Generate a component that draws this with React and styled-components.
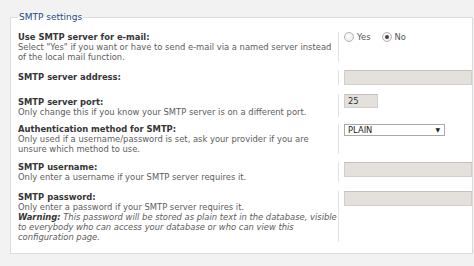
import React from "react";
import styled, { createGlobalStyle } from "styled-components";

const Global = createGlobalStyle`
  html, body { margin: 0; padding: 0; }
  body {
    background: #f2f2f2;
    font-family: "DejaVu Sans", Verdana, sans-serif;
    font-size: 8.4px;
    width: 474px;
    height: 266px;
    overflow: hidden;
  }
`;

const Page = styled.div`
  padding: 12px 1px 0 10px;
`;

const Fieldset = styled.fieldset`
  margin: 0;
  padding: 10.4px 0 0 7px;
  border: 1px solid #dcdcdc;
  background: #fff;
  height: 242px;
  box-sizing: border-box;
`;

const Legend = styled.legend`
  padding: 0 1px;
  margin-left: 0;
  color: #1f4a84;
  font-size: 9px;
  font-family: "DejaVu Sans", Verdana, sans-serif;
`;

const Row = styled.div`
  display: grid;
  grid-template-columns: 320px 1fr;
  align-items: ${(p) => (p.$center ? "center" : "start")};
  margin-bottom: ${(p) => p.$gap ?? 7.5}px;
  line-height: 10px;
`;

const LabelCell = styled.div`
  padding: ${(p) => p.$pt ?? 0}px 1px 0 0;
`;

const Title = styled.div`
  font-weight: bold;
  color: #363636;
`;

const Desc = styled.div`
  color: #5c5c5c;
`;

const Warn = styled.span`
  font-style: italic;
  color: #5c5c5c;
`;

const WarnLabel = styled.b`
  color: #363636;
`;

const FieldCell = styled.div`
  align-self: stretch;
  border-left: 1px solid #e2e2e2;
  padding-left: 5px;
`;

const TextBox = styled.div`
  box-sizing: border-box;
  width: ${(p) => p.$w}px;
  height: ${(p) => p.$h ?? 15}px;
  background: #e4e1dc;
  border: 1px solid #d2cfca;
  border-top-color: #c4c1bc;
  color: #333;
  padding: 1px 3px;
  line-height: 11px;
`;

const Radios = styled.div`
  display: flex;
  align-items: center;
  gap: 11px;
  color: #555;
  height: 10px;
`;

const RadioLabel = styled.label`
  display: flex;
  align-items: center;
  gap: 3px;
`;

const RadioDot = styled.span`
  box-sizing: border-box;
  width: 10px;
  height: 10px;
  border-radius: 50%;
  border: 1px solid #b4b4b4;
  background: radial-gradient(circle at 40% 40%, #fff 0%, #e6e6e6 100%);
  display: flex;
  align-items: center;
  justify-content: center;
  &::after {
    content: "";
    width: 4px;
    height: 4px;
    border-radius: 50%;
    background: ${(p) => (p.$on ? "#444" : "transparent")};
  }
`;

const Select = styled.div`
  box-sizing: border-box;
  width: 101px;
  height: 12px;
  border: 1px solid #a9a9a9;
  background: #fff;
  display: flex;
  align-items: center;
  justify-content: space-between;
  padding: 0 4px 0 3px;
  color: #222;
  font-size: 8.4px;
`;

const Arrow = styled.span`
  font-size: 6px;
  color: #222;
`;

export default function App() {
  return (
    <>
      <Global />
      <Page>
        <Fieldset>
          <Legend>SMTP settings</Legend>
          <Row>
            <LabelCell>
              <Title>Use SMTP server for e-mail:</Title>
              <Desc>
                Select "Yes" if you want or have to send e-mail via a named server instead of the local mail function.
              </Desc>
            </LabelCell>
            <FieldCell>
              <Radios>
                <RadioLabel>
                  <RadioDot />
                  Yes
                </RadioLabel>
                <RadioLabel>
                  <RadioDot $on />
                  No
                </RadioLabel>
              </Radios>
            </FieldCell>
          </Row>
          <Row $center $gap={9.3}>
            <LabelCell>
              <Title>SMTP server address:</Title>
            </LabelCell>
            <FieldCell>
              <TextBox $w={128} />
            </FieldCell>
          </Row>
          <Row>
            <LabelCell $pt={2.4}>
              <Title>SMTP server port:</Title>
              <Desc>Only change this if you know your SMTP server is on a different port.</Desc>
            </LabelCell>
            <FieldCell>
              <TextBox $w={34} $h={14}>25</TextBox>
            </FieldCell>
          </Row>
          <Row>
            <LabelCell>
              <Title>Authentication method for SMTP:</Title>
              <Desc>
                Only used if a username/password is set, ask your provider if you are unsure which method to use.
              </Desc>
            </LabelCell>
            <FieldCell>
              <Select>
                PLAIN
                <Arrow>▼</Arrow>
              </Select>
            </FieldCell>
          </Row>
          <Row $gap={8.7}>
            <LabelCell $pt={0.3}>
              <Title>SMTP username:</Title>
              <Desc>Only enter a username if your SMTP server requires it.</Desc>
            </LabelCell>
            <FieldCell>
              <TextBox $w={128} />
            </FieldCell>
          </Row>
          <Row>
            <LabelCell $pt={1}>
              <Title>SMTP password:</Title>
              <Desc>
                Only enter a password if your SMTP server requires it.
                <br />
                <Warn>
                  <WarnLabel>Warning:</WarnLabel> This password will be stored as plain text in the database, visible to everybody who can access your database or who can view this configuration page.
                </Warn>
              </Desc>
            </LabelCell>
            <FieldCell>
              <TextBox $w={128} />
            </FieldCell>
          </Row>
        </Fieldset>
      </Page>
    </>
  );
}
